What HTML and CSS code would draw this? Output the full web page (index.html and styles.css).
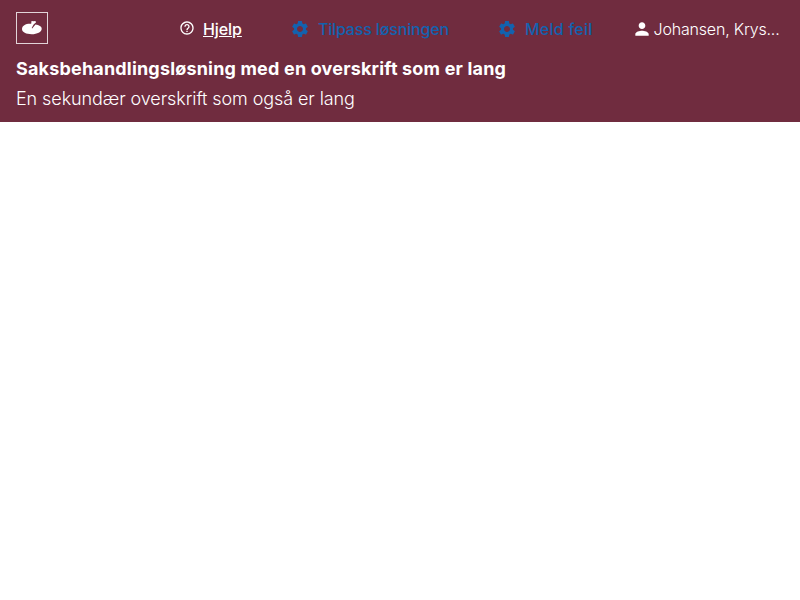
FILE: index.html
```html
<!DOCTYPE html>
<html lang="nb">
<head>
<meta charset="utf-8">
<title>Saksbehandlingsløsning</title>
<link rel="stylesheet" href="styles.css">
</head>
<body>
<header class="header">
  <div class="top">
    <svg class="logo" width="32" height="32" viewBox="0 0 32 32"><rect x=".5" y=".5" width="31" height="31" fill="none" stroke="#fff" stroke-opacity=".8"/><path fill="#fff" d="M6 17c0-3.300 3.500-5.300 8-5.300l1.200.1.300-2.900 2.200.3 1.600-.3.8 1.400-2.500 2.300-1.900 3.500.5.300 3.300-3.800c3.500.5 6.200 1.900 6.200 4.100 0 3.200-4.500 5.500-10 5.500S6 20.300 6 17z"/></svg>
    <nav class="nav">
      <a class="help"><svg width="16" height="16" viewBox="0 0 24 24" fill="#fff"><path d="M11 18h2v-2h-2v2zm1-16C6.480 2 2 6.480 2 12s4.480 10 10 10 10-4.480 10-10S17.520 2 12 2zm0 18c-4.410 0-8-3.590-8-8s3.590-8 8-8 8 3.590 8 8-3.590 8-8 8zm0-14c-2.210 0-4 1.790-4 4h2c0-1.100.9-2 2-2s2 .9 2 2c0 2-3 1.750-3 5h2c0-2.250 3-2.500 3-5 0-2.210-1.790-4-4-4z"/></svg><span>Hjelp</span></a>
      <a class="action tilpass"><svg width="20" height="20" viewBox="0 0 24 24"><use href="#gear"/></svg><span>Tilpass løsningen</span></a>
      <a class="action feil"><svg width="20" height="20" viewBox="0 0 24 24"><path id="gear" fill="#1362ae" d="M19.140 12.940c.04-.3.060-.61.060-.94 0-.32-.02-.64-.07-.94l2.030-1.580a.49.490 0 0 0 .12-.61l-1.920-3.320a.488.488 0 0 0-.59-.22l-2.390.96c-.5-.38-1.030-.7-1.620-.94l-.36-2.540a.484.484 0 0 0-.48-.41h-3.840c-.24 0-.43.17-.47.41l-.36 2.540c-.59.240-1.130.570-1.620.940l-2.390-.96c-.22-.08-.47 0-.59.220L2.740 8.870c-.12.210-.08.470.12.610l2.030 1.580c-.05.3-.09.630-.09.940s.02.640.070.940l-2.030 1.580a.49.490 0 0 0-.12.610l1.920 3.320c.12.220.370.290.590.220l2.390-.96c.5.380 1.030.7 1.620.940l.36 2.540c.05.240.240.410.480.410h3.840c.24 0 .44-.17.470-.41l.36-2.540c.59-.24 1.130-.56 1.620-.94l2.390.96c.22.080.470 0 .59-.22l1.920-3.320c.12-.22.070-.47-.12-.61l-2.010-1.580zM12 15.600c-1.980 0-3.600-1.620-3.600-3.600s1.620-3.600 3.600-3.600 3.600 1.620 3.600 3.600-1.620 3.600-3.600 3.600z"/></svg><span>Meld feil</span></a>
      <div class="user"><svg width="20" height="20" viewBox="0 0 24 24" fill="#fff"><path d="M12 12c2.210 0 4-1.790 4-4s-1.790-4-4-4-4 1.790-4 4 1.790 4 4 4zm0 2c-2.670 0-8 1.340-8 4v2h16v-2c0-2.660-5.330-4-8-4z"/></svg><span>Johansen, Krys...</span></div>
    </nav>
  </div>
  <h1 class="title">Saksbehandlingsløsning med en overskrift som er lang</h1>
  <p class="subtitle">En sekundær overskrift som også er lang</p>
</header>
</body>
</html>
```
FILE: styles.css
```css
* { box-sizing: border-box; }
body { margin: 0; background: #fff; color: #fff; font-family: Inter, sans-serif; font-size: 16px; }
.header { height: 122px; padding: 12px 16px 0; background: #702c3f; }
.top { display: flex; align-items: center; height: 32px; }
.nav { display: flex; align-items: center; margin-left: 131px; white-space: nowrap; line-height: 24px; padding-top: 2px; }
.nav a, .user { display: flex; align-items: center; }
.help { gap: 8px; font-weight: 500; letter-spacing: -0.08px; }
.help span { text-decoration: underline; }
.help svg { margin-top: -2px; }
.action { gap: 8px; color: #1362ae; font-weight: 500; }
.tilpass { margin-left: 48px; letter-spacing: -0.15px; }
.feil { margin-left: 48px; letter-spacing: 0.25px; }
.user { margin-left: 39px; gap: 2px; font-weight: 300; letter-spacing: -0.19px; }
.title { margin: 11px 0 0; font-size: 18px; line-height: 28px; font-weight: 700; letter-spacing: 0.18px; }
.subtitle { margin: 2px 0 0; font-size: 18px; line-height: 28px; font-weight: 300; letter-spacing: -0.09px; }
svg { flex: none; display: block; }
```
